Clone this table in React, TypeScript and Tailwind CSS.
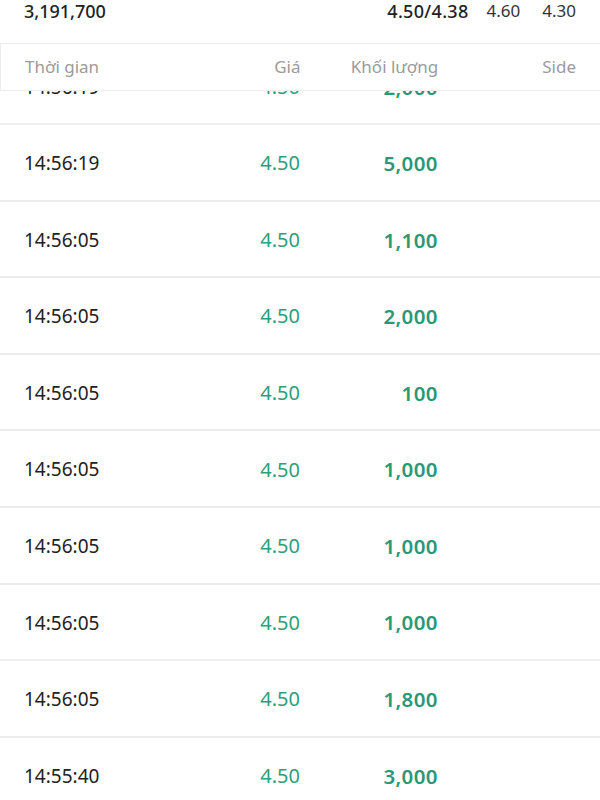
import React from "react";

const rows = [
  ["14:56:19", "4.50", "5,000"],
  ["14:56:05", "4.50", "1,100"],
  ["14:56:05", "4.50", "2,000"],
  ["14:56:05", "4.50", "100"],
  ["14:56:05", "4.50", "1,000"],
  ["14:56:05", "4.50", "1,000"],
  ["14:56:05", "4.50", "1,000"],
  ["14:56:05", "4.50", "1,800"],
  ["14:55:40", "4.50", "3,000"],
];

function Row({ t, p, v }: { t: string; p: string; v: string }) {
  return (
    <div className="grid grid-cols-4 items-center px-6 h-full pt-[2px]">
      <div className="text-[19px] text-[#222222]">{t}</div>
      <div className="text-right text-[20px] text-[#2f9e7a]">{p}</div>
      <div className="text-right text-[20.5px] font-semibold tracking-[0.4px] text-[#2a9877]">{v}</div>
      <div className="text-right"></div>
    </div>
  );
}

export default function App() {
  return (
    <div
      className="w-[600px] h-[800px] overflow-hidden bg-white"
      style={{ fontFamily: '"Noto Sans", Lato, sans-serif' }}
    >
      <div className="h-[22px] px-6 flex items-center justify-between">
        <div className="text-[18px] leading-[22px] font-medium text-[#222222]">3,191,700</div>
        <div className="flex items-center">
          <span className="text-[18px] leading-[22px] font-medium tracking-[0.3px] text-[#222222]">4.50/4.38</span>
          <span className="ml-[18px] text-[17px] leading-[22px] text-[#333333]">4.60</span>
          <span className="ml-[22px] text-[17px] leading-[22px] text-[#333333]">4.30</span>
        </div>
      </div>
      <div className="mt-[21px] h-[48px] border border-r-0 border-[#ededed] grid grid-cols-4 items-center px-6 text-[17px] text-[#9b9b9b]">
        <div>Thời gian</div>
        <div className="text-right">Giá</div>
        <div className="text-right">Khối lượng</div>
        <div className="text-right">Side</div>
      </div>
      <div className="h-[34px] overflow-hidden border-b-2 border-[#ececec]">
        <div className="-mt-[43px] h-[76px]">
          <Row t="14:56:19" p="4.50" v="2,000" />
        </div>
      </div>
      {rows.map((r, i) => (
        <div key={i} className="h-[76.6px] border-b-2 border-[#ececec]">
          <Row t={r[0]} p={r[1]} v={r[2]} />
        </div>
      ))}
    </div>
  );
}
